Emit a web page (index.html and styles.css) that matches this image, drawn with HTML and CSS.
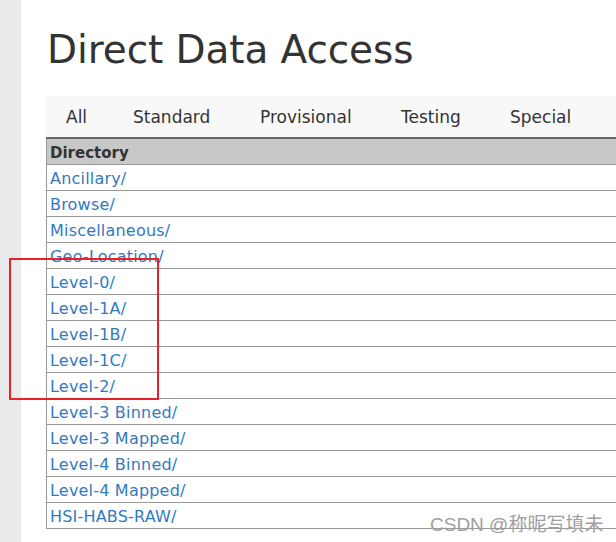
FILE: index.html
```html
<!DOCTYPE html>
<html>
<head>
<meta charset="utf-8">
<link rel="stylesheet" href="styles.css">
</head>
<body>
<div class="page">
  <div class="side"></div>
  <main class="main">
    <h1 class="title">Direct Data Access</h1>
    <nav class="tabs">
      <span class="tab">All</span>
      <span class="tab">Standard</span>
      <span class="tab">Provisional</span>
      <span class="tab">Testing</span>
      <span class="tab">Special</span>
    </nav>
    <table class="dir">
      <thead><tr><th>Directory</th></tr></thead>
      <tbody>
        <tr><td><a href="#">Ancillary/</a></td></tr>
        <tr><td><a href="#">Browse/</a></td></tr>
        <tr><td><a href="#">Miscellaneous/</a></td></tr>
        <tr><td><a href="#">Geo-Location/</a></td></tr>
        <tr><td><a href="#">Level-0/</a></td></tr>
        <tr><td><a href="#">Level-1A/</a></td></tr>
        <tr><td><a href="#">Level-1B/</a></td></tr>
        <tr><td><a href="#">Level-1C/</a></td></tr>
        <tr><td><a href="#">Level-2/</a></td></tr>
        <tr><td><a href="#">Level-3 Binned/</a></td></tr>
        <tr><td><a href="#">Level-3 Mapped/</a></td></tr>
        <tr><td><a href="#">Level-4 Binned/</a></td></tr>
        <tr><td><a href="#">Level-4 Mapped/</a></td></tr>
        <tr><td><a href="#">HSI-HABS-RAW/</a></td></tr>
      </tbody>
    </table>
  </main>
</div>
<div class="highlight"></div>
<div class="watermark">CSDN @称昵写填未</div>
</body>
</html>
```
FILE: styles.css
```css
html, body {
  margin: 0;
  padding: 0;
  background: #fff;
  overflow: hidden;
}
body {
  font-family: "DejaVu Sans", "Open Sans", sans-serif;
  color: #333;
  width: 616px;
  height: 542px;
  position: relative;
}
.page {
  display: flex;
  height: 542px;
}
.side {
  width: 21px;
  flex: none;
  background: #ebebeb;
}
.main {
  flex: 1;
  padding-left: 25px;
  min-width: 0;
}
.title {
  margin: 24px 0 0 1px;
  font-weight: 400;
  font-size: 39px;
  line-height: 52px;
  color: #333;
  letter-spacing: -0.1px;
}
.tabs {
  margin-top: 20px;
  height: 41px;
  box-sizing: content-box;
  background: #f8f8f8;
  border-bottom: 2px solid #666;
  display: grid;
  grid-template-columns: 67px 127px 141px 109px 1fr;
  align-items: center;
  padding-left: 20px;
  width: 580px;
  font-size: 17px;
  color: #333;
}
.tab {
  white-space: nowrap;
}
.dir {
  border-collapse: collapse;
  width: 600px;
  font-size: 16px;
}
.dir th, .dir td {
  text-align: left;
  padding: 2px 3px 0;
  height: 23px;
  border: 1px solid #999;
  border-top: none;
  line-height: 23px;
  white-space: nowrap;
}
.dir th {
  background: #c8c8c8;
  font-weight: 700;
  font-size: 15px;
  color: #333;
  padding-top: 3px;
  height: 22px;
  line-height: 22px;
}
.dir a {
  color: #2f7bbf;
  text-decoration: none;
  letter-spacing: 0.2px;
}
.highlight {
  position: absolute;
  left: 9px;
  top: 258px;
  width: 146px;
  height: 138px;
  border: 2px solid #e8202a;
}
.watermark {
  position: absolute;
  left: 430px;
  top: 515px;
  font-family: "Liberation Sans", "Noto Sans CJK SC", sans-serif;
  font-size: 19px;
  line-height: 19px;
  color: #a0a0a0;
}
```
